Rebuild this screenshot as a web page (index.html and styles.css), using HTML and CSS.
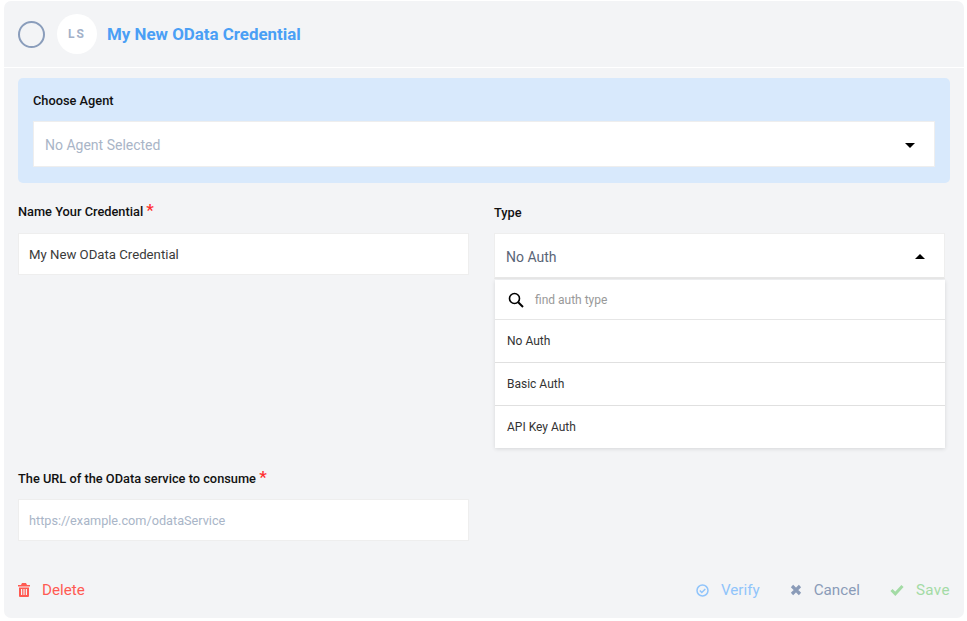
FILE: index.html
```html
<!DOCTYPE html>
<html lang="en">
<head>
    <meta charset="UTF-8">
    <title>OData Credential</title>
    <link rel="stylesheet" href="styles.css">
</head>
<body>
    <div class="panel">
        <div class="head">
            <div class="ring"></div>
            <div class="avatar">LS</div>
            <div class="title">My New OData Credential</div>
        </div>

        <div class="agent">
            <div class="label">Choose Agent</div>
            <div class="agent-select">
                <span>No Agent Selected</span>
                <span class="caret"></span>
            </div>
        </div>

        <div class="row row-name">
            <div class="field">
                <div class="label">Name Your Credential <span class="req">*</span></div>
                <div class="input">My New OData Credential</div>
            </div>
            <div class="field type-field">
                <div class="label">Type</div>
                <div class="type-select">
                    <span>No Auth</span>
                    <span class="caret up"></span>
                </div>
                <!-- open dropdown -->
                <div class="menu">
                    <div class="menu-search">
                        <svg width="16" height="16" viewBox="0 0 16 16" fill="none" stroke="#000" stroke-width="1.6">
                            <circle cx="6.5" cy="6.5" r="5"/>
                            <path d="M10.2 10.2L15 15" stroke-width="2"/>
                        </svg>
                        <span>find auth type</span>
                    </div>
                    <div class="menu-item">No Auth</div>
                    <div class="menu-item">Basic Auth</div>
                    <div class="menu-item">API Key Auth</div>
                </div>
            </div>
        </div>

        <div class="row row-url">
            <div class="field">
                <div class="label">The URL of the OData service to consume <span class="req">*</span></div>
                <div class="input placeholder">https://example.com/odataService</div>
            </div>
        </div>

        <div class="foot">
            <div class="btn delete">
                <svg width="12" height="14" viewBox="0 0 12 14" fill="#ff5a52">
                    <path d="M4 0h4l1 2h3v1.5H0V2h3zM1 4.5h10V13a1 1 0 0 1-1 1H2a1 1 0 0 1-1-1zM3 6v6h1.200V6zm2.400 0v6h1.200V6zm2.400 0v6H9V6z"/>
                </svg>
                <span>Delete</span>
            </div>
            <div class="actions">
                <div class="btn verify">
                    <svg width="13" height="13" viewBox="0 0 13 13" fill="none" stroke="#90c4fb" stroke-width="1.500">
                        <circle cx="6.500" cy="6.500" r="5.500"/>
                        <path d="M3.800 6.500l2 2 3.500-3.500"/>
                    </svg>
                    <span>Verify</span>
                </div>
                <div class="btn cancel">
                    <svg width="12" height="12" viewBox="0 0 12 12" fill="none" stroke="#8a9bb8" stroke-width="3.200">
                        <path d="M2 2l8 8M10 2l-8 8"/>
                    </svg>
                    <span>Cancel</span>
                </div>
                <div class="btn save">
                    <svg width="14" height="12" viewBox="0 0 14 12" fill="none" stroke="#a3dba5" stroke-width="3">
                        <path d="M1.500 6l3.800 3.800L12.500 2"/>
                    </svg>
                    <span>Save</span>
                </div>
            </div>
        </div>
    </div>
</body>
</html>
```

FILE: styles.css
```css
* {
    margin: 0;
    padding: 0;
    box-sizing: border-box;
}

body {
    background-color: #fff;
    font-family: Roboto, "Liberation Sans", sans-serif;
    padding: 1px 3px 3px 4px;
}

.panel {
    height: 617px;
    background-color: #f3f4f6;
    border-radius: 7px;
    padding: 0 14px;
}

.head {
    height: 67px;
    margin: 0 -14px;
    padding: 0 14px;
    border-bottom: 1px solid #fff;
    display: flex;
    align-items: center;
}

.ring {
    width: 27px;
    height: 27px;
    border: 2px solid #8a9dbb;
    border-radius: 50%;
}

.avatar {
    width: 40px;
    height: 40px;
    margin-left: 12px;
    background-color: #fff;
    border-radius: 50%;
    color: #a3b1c9;
    font-size: 12px;
    font-weight: 700;
    letter-spacing: 2px;
    text-align: center;
    line-height: 40px;
}

.title {
    margin-left: 10px;
    color: #4a9ff5;
    font-size: 16.900px;
    font-weight: 700;
}

.label {
    color: #111;
    font-size: 12.800px;
    font-weight: 500;
    line-height: 16px;
}

.req {
    color: #ff2d2d;
    font-size: 17px;
    line-height: 0;
}

.agent {
    height: 105px;
    margin-top: 10px;
    width: 932px;
    background-color: #d8e9fc;
    border-radius: 5px;
    padding: 15px 15px 0;
}

.agent-select {
    height: 46px;
    margin-top: 12px;
    background-color: #fff;
    border: 1px solid #eee;
    display: flex;
    align-items: center;
    justify-content: space-between;
    padding: 2px 19px 0 11px;
    color: #a9b5c7;
    font-size: 14px;
}

.caret {
    width: 0;
    height: 0;
    border-left: 5px solid transparent;
    border-right: 5px solid transparent;
    border-top: 5px solid #000;
}

.caret.up {
    border-top: 0;
    border-bottom: 5px solid #000;
}

.row {
    display: grid;
    grid-template-columns: 451px 451px;
    column-gap: 25px;
}

.row-name {
    margin-top: 21px;
}

.row-url {
    margin-top: 192px;
}

.row-url .input {
    margin-top: 12px;
}

.type-field .label {
    padding-top: 1px;
    margin-bottom: -1px;
}

.field {
    position: relative;
}

.input {
    height: 42px;
    margin-top: 13px;
    background-color: #fff;
    border: 1px solid #eee;
    padding: 0 10px;
    color: #3a3a3a;
    font-size: 13.200px;
    line-height: 41px;
}

.placeholder {
    color: #a9b5c7;
    font-size: 12.700px;
}

.type-select {
    height: 46px;
    margin-top: 13px;
    padding: 2px 19px 0 11px;
    background-color: #fff;
    border: 1px solid #eee;
    border-bottom: 2px solid #e8e8e8;
    display: flex;
    align-items: center;
    justify-content: space-between;
    color: #5a6577;
    font-size: 14px;
}

.menu {
    position: absolute;
    top: 76px;
    left: 1px;
    width: 450px;
    background-color: #fff;
    box-shadow: 0 1px 4px rgba(0, 0, 0, 0.12);
}

.menu-search {
    height: 40px;
    border-bottom: 1px solid #e6e6e6;
    display: flex;
    align-items: center;
    padding-left: 13px;
    color: #999;
    font-size: 12px;
}

.menu-search span {
    margin-left: 11px;
}

.menu-item {
    height: 43px;
    border-bottom: 1px solid #e0e0e0;
    padding-left: 12px;
    color: #333;
    font-size: 12px;
    line-height: 42px;
}

.menu-item:last-child {
    height: 42px;
    border-bottom: 0;
}

.foot {
    margin-top: 40px;
    display: flex;
    justify-content: space-between;
    width: 932px;
}

.actions {
    display: flex;
    gap: 30px;
}

.btn {
    display: flex;
    align-items: center;
    height: 18px;
    font-size: 15.200px;
}

.btn span {
    margin-left: 12px;
}

.delete {
    color: #ff5a52;
}

.verify {
    color: #90c4fb;
}

.cancel {
    color: #8a9bb8;
}

.save {
    color: #a3dba5;
    letter-spacing: 0.4px;
}
```
